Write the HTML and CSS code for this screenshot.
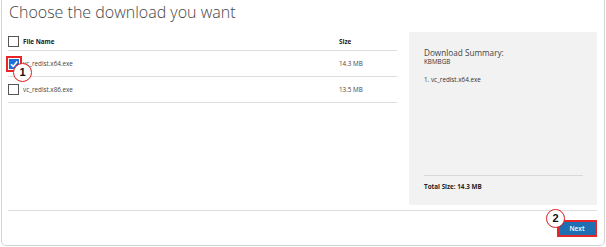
FILE: index.html
```html
<!DOCTYPE html>
<html>
<head>
<meta charset="utf-8">
<link rel="stylesheet" href="styles.css">
</head>
<body>
<div class="frame">
  <h1 class="title">Choose the download you want</h1>
  <div class="main">
    <div class="table">
      <div class="row head">
        <span class="cell-check"><span class="box"></span></span>
        <span class="cell-name">File Name</span>
        <span class="cell-size">Size</span>
      </div>
      <div class="row">
        <span class="cell-check"><span class="hl"><span class="box checked"><svg viewBox="0 0 10 10" width="10" height="10"><path d="M2 5.2 L4.2 7.4 L8.2 2.6" fill="none" stroke="#fff" stroke-width="1.6"/></svg></span></span><span class="badge b1">1</span></span>
        <span class="cell-name">vc_redist.x64.exe</span>
        <span class="cell-size">14.3 MB</span>
      </div>
      <div class="row">
        <span class="cell-check"><span class="box"></span></span>
        <span class="cell-name">vc_redist.x86.exe</span>
        <span class="cell-size">13.5 MB</span>
      </div>
    </div>
    <div class="summary">
      <div class="sum-top">
        <div class="sum-title">Download Summary:</div>
        <div class="sum-kb">KBMBGB</div>
        <div class="sum-item">1. vc_redist.x64.exe</div>
      </div>
      <div class="sum-total">Total Size: 14.3 MB</div>
    </div>
  </div>
  <div class="footer">
    <span class="btn-wrap"><span class="badge b2">2</span><button class="next">Next</button></span>
  </div>
</div>
</body>
</html>
```
FILE: styles.css
```css
html, body { margin: 0; padding: 0; background: #fff; }
body { width: 606px; height: 247px; overflow: hidden; font-family: "Open Sans", "Noto Sans", sans-serif; color: #333; }
.frame {
  margin: -6px 1px 0 1px;
  height: 252px;
  box-sizing: border-box;
  border: 1px solid #d4d4d4;
  border-radius: 5px;
  padding: 7px 7px 0 6px;
  display: flex;
  flex-direction: column;
}
.title {
  margin: 0 0 10px 1px;
  font-weight: 300;
  font-size: 16px;
  line-height: 20px;
  color: #454545;
}
.main { display: flex; gap: 12px; height: 173px; }
.table { width: 389px; flex: none; }
.row {
  display: flex;
  align-items: center;
  height: 25px;
  border-bottom: 1px solid #dedede;
  font-size: 6.3px;
  color: #444;
}
.row.head { height: 18px; font-weight: 700; color: #222; }
.cell-check { width: 15px; flex: none; position: relative; display: flex; align-items: center; }
.cell-name { width: 316px; flex: none; }
.cell-size { flex: 1; }
.box {
  display: inline-flex; align-items: center; justify-content: center;
  width: 9px; height: 9px;
  border: 1px solid #555;
  background: #fff;
}
.hl { margin-left: -2px; border: 2px solid #e8262a; display: inline-flex; padding: 1px; }
.box.checked { background: #1f6fd8; border-color: #1f6fd8; width: 10px; height: 10px; border-width: 0; }
.badge {
  position: absolute;
  width: 17px; height: 17px;
  border-radius: 50%;
  border: 1.5px solid #e3262a;
  background: #fff;
  color: #111;
  font-family: "Liberation Sans", Arial, sans-serif;
  font-weight: 700;
  font-size: 11px;
  line-height: 17px;
  text-align: center;
  box-shadow: 0 0 1px rgba(0,0,0,0.2);
}
.b1 { left: 5px; top: 7px; }
.summary {
  width: 188px; flex: none;
  background: #f2f2f2;
  box-sizing: border-box;
  padding: 16px 14px 14px 15px;
  display: flex; flex-direction: column; justify-content: space-between;
}
.sum-title { font-size: 8.2px; line-height: 10px; color: #444; }
.sum-kb { font-size: 6.3px; line-height: 8px; color: #333; }
.sum-item { font-size: 6.3px; line-height: 8px; margin-top: 10px; color: #333; }
.sum-total { border-top: 1px solid #d8d8d8; padding-top: 7px; font-size: 6.3px; line-height: 8px; font-weight: 700; color: #222; }
.footer {
  margin-top: 5px;
  border-top: 1px solid #dcdcdc;
  padding-top: 9px;
  display: flex; justify-content: flex-end;
}
.btn-wrap { position: relative; display: inline-flex; }
.next {
  width: 40px; height: 17px;
  box-sizing: border-box;
  border: 2px solid #e8262a;
  background: #1f6fb2;
  color: #fff;
  font-family: "Open Sans", sans-serif;
  font-size: 6.5px;
  font-weight: 600;
  padding: 0;
  margin: 0;
}
.b2 { left: -11px; top: -11px; }
```
